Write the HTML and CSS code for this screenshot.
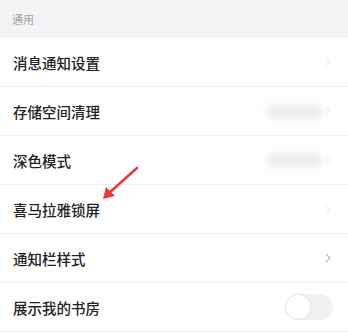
FILE: index.html
```html
<!DOCTYPE html>
<html lang="zh">
<head>
<meta charset="utf-8">
<link rel="stylesheet" href="styles.css">
</head>
<body>
<div class="page">
  <div class="section-title">通用</div>
  <div class="list">
    <div class="row">
      <span class="label">消息通知设置</span>
      <span class="right"><svg class="chev faint" viewBox="0 0 6 10"><path d="M1 1l4 4-4 4"/></svg></span>
    </div>
    <div class="row">
      <span class="label">存储空间清理</span>
      <span class="right"><span class="blur-val"></span><svg class="chev faint" viewBox="0 0 6 10"><path d="M1 1l4 4-4 4"/></svg></span>
    </div>
    <div class="row">
      <span class="label">深色模式</span>
      <span class="right"><span class="blur-val"></span><svg class="chev faint" viewBox="0 0 6 10"><path d="M1 1l4 4-4 4"/></svg></span>
    </div>
    <div class="row">
      <span class="label">喜马拉雅锁屏</span>
      <span class="right"><svg class="chev faint" viewBox="0 0 6 10"><path d="M1 1l4 4-4 4"/></svg></span>
    </div>
    <div class="row">
      <span class="label">通知栏样式</span>
      <span class="right"><svg class="chev" viewBox="0 0 6 10"><path d="M1 1l4 4-4 4"/></svg></span>
    </div>
    <div class="row">
      <span class="label">展示我的书房</span>
      <span class="right"><span class="toggle"><span class="knob"></span></span></span>
    </div>
  </div>
  <svg class="arrow" viewBox="0 0 40 36" width="40" height="36">
    <path d="M37 2L9 27" stroke="#e23b3b" stroke-width="2.6" stroke-linecap="round" fill="none"/>
    <path d="M3 33L6 21L15 30Z" fill="#e23b3b"/>
  </svg>
</div>
</body>
</html>
```
FILE: styles.css
```css
* { box-sizing: border-box; }
html, body { margin: 0; padding: 0; }
body {
  width: 348px;
  height: 333px;
  overflow: hidden;
  background: #ffffff;
  font-family: "Noto Sans CJK SC", "Noto Sans", sans-serif;
}
.page { position: relative; width: 348px; height: 333px; }
.section-title {
  height: 38px;
  background: #f4f4f6;
  color: #a2a2a6;
  font-size: 11px;
  line-height: 38px;
  padding-left: 12px;
}
.list { display: flex; flex-direction: column; }
.row {
  height: 49px;
  display: flex;
  align-items: center;
  justify-content: space-between;
  padding: 0 17px 0 13px;
  border-bottom: 1px solid #efeff1;
}
.label {
  font-size: 14.5px;
  color: #222222;
  font-weight: 500;
}
.right { display: flex; align-items: center; gap: 4px; }
.chev {
  width: 6px;
  height: 10px;
  fill: none;
  stroke: #b8b8bc;
  stroke-width: 1.1;
}
.chev.faint { stroke: #f0f0f2; }
.blur-val {
  width: 54px;
  height: 11px;
  border-radius: 5px;
  background: #e6e6e8;
  filter: blur(4px);
}
.toggle {
  width: 48px;
  height: 26px;
  border-radius: 13px;
  background: #f1f1f3;
  display: flex;
  align-items: center;
  padding-left: 1px;
  margin-right: -2px;
}
.knob {
  width: 24px;
  height: 24px;
  border-radius: 50%;
  background: #ffffff;
  box-shadow: 0 0 3px rgba(0,0,0,0.1);
}
.arrow {
  position: absolute;
  left: 100px;
  top: 166px;
}
```
